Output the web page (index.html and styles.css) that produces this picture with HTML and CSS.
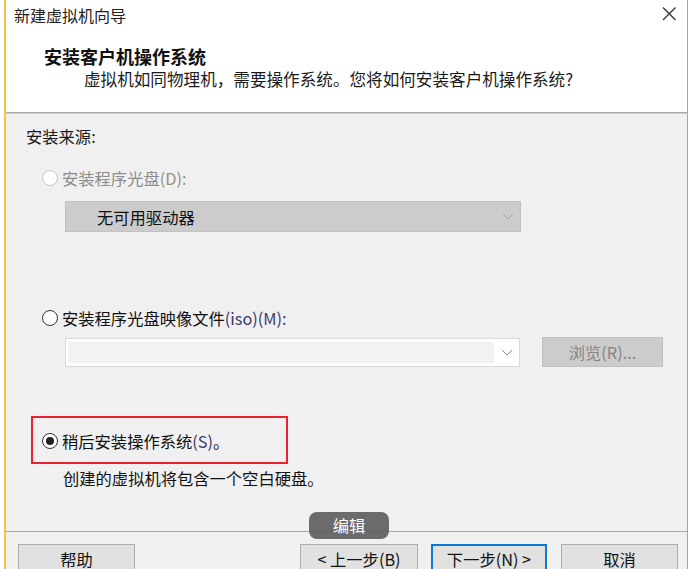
FILE: index.html
```html
<!DOCTYPE html>
<html lang="zh-CN">
<head>
  <meta charset="UTF-8" />
  <meta name="viewport" content="width=device-width, initial-scale=1.0"/>
  <title>新建虚拟机向导</title>
  <link rel="stylesheet" href="styles.css">
</head>
<body>

<div class="window">
  <div class="header">
    <div class="titlebar">
      <span class="title">新建虚拟机向导</span>
      <svg class="close" width="16" height="16" viewBox="0 0 16 16">
        <path d="M2 1.5 L14.5 14 M14.5 1.5 L2 14" stroke="#333" stroke-width="1.3" fill="none"/>
      </svg>
    </div>
    <div class="heading">安装客户机操作系统</div>
    <div class="subtitle">虚拟机如同物理机，需要操作系统。您将如何安装客户机操作系统?</div>
  </div>

  <div class="panel">
    <div class="section-label">安装来源:</div>

    <div class="option">
      <label class="radio-row disabled">
        <span class="radio"></span>
        <span>安装程序光盘<span class="accel">(D):</span></span>
      </label>
      <div class="select disabled-select">
        <span>无可用驱动器</span>
        <svg class="chevron" width="12" height="7" viewBox="0 0 12 7">
          <path d="M1 1 L6 6 L11 1" stroke="#a8a8a8" stroke-width="1" fill="none"/>
        </svg>
      </div>
    </div>

    <div class="option iso">
      <label class="radio-row">
        <span class="radio"></span>
        <span>安装程序光盘映像文件<span class="accel">(iso)(M):</span></span>
      </label>
      <div class="file-row">
        <div class="combo">
          <div class="combo-field"></div>
          <svg class="chevron" width="12" height="7" viewBox="0 0 12 7">
            <path d="M1 1 L6 6 L11 1" stroke="#8a8a8a" stroke-width="1" fill="none"/>
          </svg>
        </div>
        <div class="browse">浏览(R)...</div>
      </div>
    </div>

    <div class="later-box">
      <label class="radio-row">
        <span class="radio checked"></span>
        <span>稍后安装操作系统<span class="accel">(S)</span>。</span>
      </label>
    </div>
    <div class="note">创建的虚拟机将包含一个空白硬盘。</div>
  </div>

  <div class="footer">
    <button class="btn">帮助</button>
    <button class="btn back">&lt; 上一步(B)</button>
    <button class="btn primary">下一步(N) &gt;</button>
    <button class="btn">取消</button>
  </div>

  <div class="tooltip">编辑</div>
</div>

</body>
</html>
```

FILE: styles.css
```css
body {
  margin: 0;
  background: #ffffff;
  font-family: "Noto Sans CJK SC", "Microsoft YaHei", sans-serif;
  font-size: 16.3px;
  color: #111;
  overflow: hidden;
}

.window {
  position: relative;
  width: 681px;
  height: 569px;
  margin-left: 4px;
  border-left: 2px solid #f2c549;
  border-right: 1px solid #a6a6a6;
  background: #f0f0f0;
  overflow: hidden;
}

/* header */
.header {
  height: 112px;
  background: #ffffff;
  border-bottom: 1px solid #a9a9a9;
}

.titlebar {
  display: flex;
  align-items: center;
  justify-content: space-between;
  height: 30px;
  padding: 0 10px 0 8px;
}

.title {
  font-size: 16px;
  color: #222;
  line-height: 20px;
}

.close {
  margin-top: -2px;
}

.heading {
  margin: 15px 0 0 38px;
  font-size: 18px;
  font-weight: bold;
  line-height: 22px;
}

.subtitle {
  margin: 1px 0 0 78px;
  font-size: 16.6px;
  line-height: 22px;
  color: #1a1a1a;
}

/* body panel */
.panel {
  box-sizing: border-box;
  height: 418px;
  border-top: 1px solid #cfcfcf;
  padding: 12px 0 0 20px;
  line-height: 20px;
}

.section-label {
  color: #1a1a1a;
}

.option {
  margin: 22px 0 0 16px;
}

.option.iso {
  margin-top: 76px;
}

.radio-row {
  display: flex;
  align-items: center;
  gap: 4px;
}

.radio {
  box-sizing: border-box;
  width: 16px;
  height: 16px;
  border: 1px solid #333;
  border-radius: 50%;
  background: #fff;
  display: flex;
  align-items: center;
  justify-content: center;
}

.radio.checked::after {
  content: "";
  width: 8px;
  height: 8px;
  border-radius: 50%;
  background: #222;
}

.disabled {
  color: #8c8c8c;
}

.disabled .radio {
  border-color: #c4c4c4;
}

.accel {
  color: #3a3a6a;
}

.disabled .accel {
  color: #9a8f7a;
}

.select {
  box-sizing: border-box;
  display: flex;
  align-items: center;
  justify-content: space-between;
  width: 456px;
  height: 31px;
  margin: 13px 0 0 23px;
  padding: 0 6px 0 31px;
}

.disabled-select {
  background: #cccccc;
  border: 1px solid #c2c2c2;
  color: #111;
}

.file-row {
  display: flex;
  align-items: flex-start;
  gap: 22px;
  margin: 9px 0 0 23px;
}

.combo {
  box-sizing: border-box;
  display: flex;
  align-items: center;
  justify-content: space-between;
  width: 455px;
  height: 29px;
  margin-top: 1px;
  background: #fff;
  border: 1px solid #d9d9d9;
  padding: 0 6px 0 2px;
}

.combo-field {
  width: 426px;
  height: 21px;
  background: #f2f2f2;
}

.browse {
  box-sizing: border-box;
  width: 121px;
  height: 30px;
  background: #cccccc;
  border: 1px solid #c0c0c0;
  color: #858585;
  text-align: center;
  line-height: 28px;
}

.later-box {
  box-sizing: border-box;
  width: 257px;
  height: 48px;
  margin: 49px 0 0 5px;
  border: 2px solid #e8232b;
  padding: 13px 0 0 9px;
}

.note {
  margin: 4px 0 0 37px;
  color: #111;
}

/* footer */
.footer {
  display: flex;
  align-items: flex-start;
  border-top: 1px solid #a9a9a9;
  padding: 12px 9px 0 12px;
}

.btn {
  box-sizing: border-box;
  width: 117px;
  height: 30px;
  font-family: inherit;
  font-size: 16.3px;
  color: #111;
  background: #e1e1e1;
  border: 1px solid #adadad;
  padding: 0;
  line-height: 26px;
}

.btn.back {
  margin-left: auto;
  width: 118px;
}

.btn.primary {
  width: 116px;
  margin-left: 13px;
  border: 2px solid #0a78d7;
}

.btn.primary + .btn {
  margin-left: 14px;
}

/* floating label */
.tooltip {
  position: absolute;
  left: 303px;
  top: 512px;
  width: 80px;
  height: 27px;
  border-radius: 8px;
  background: rgba(96, 96, 96, 0.92);
  color: #fff;
  text-align: center;
  line-height: 27px;
  font-size: 16.3px;
}
```
